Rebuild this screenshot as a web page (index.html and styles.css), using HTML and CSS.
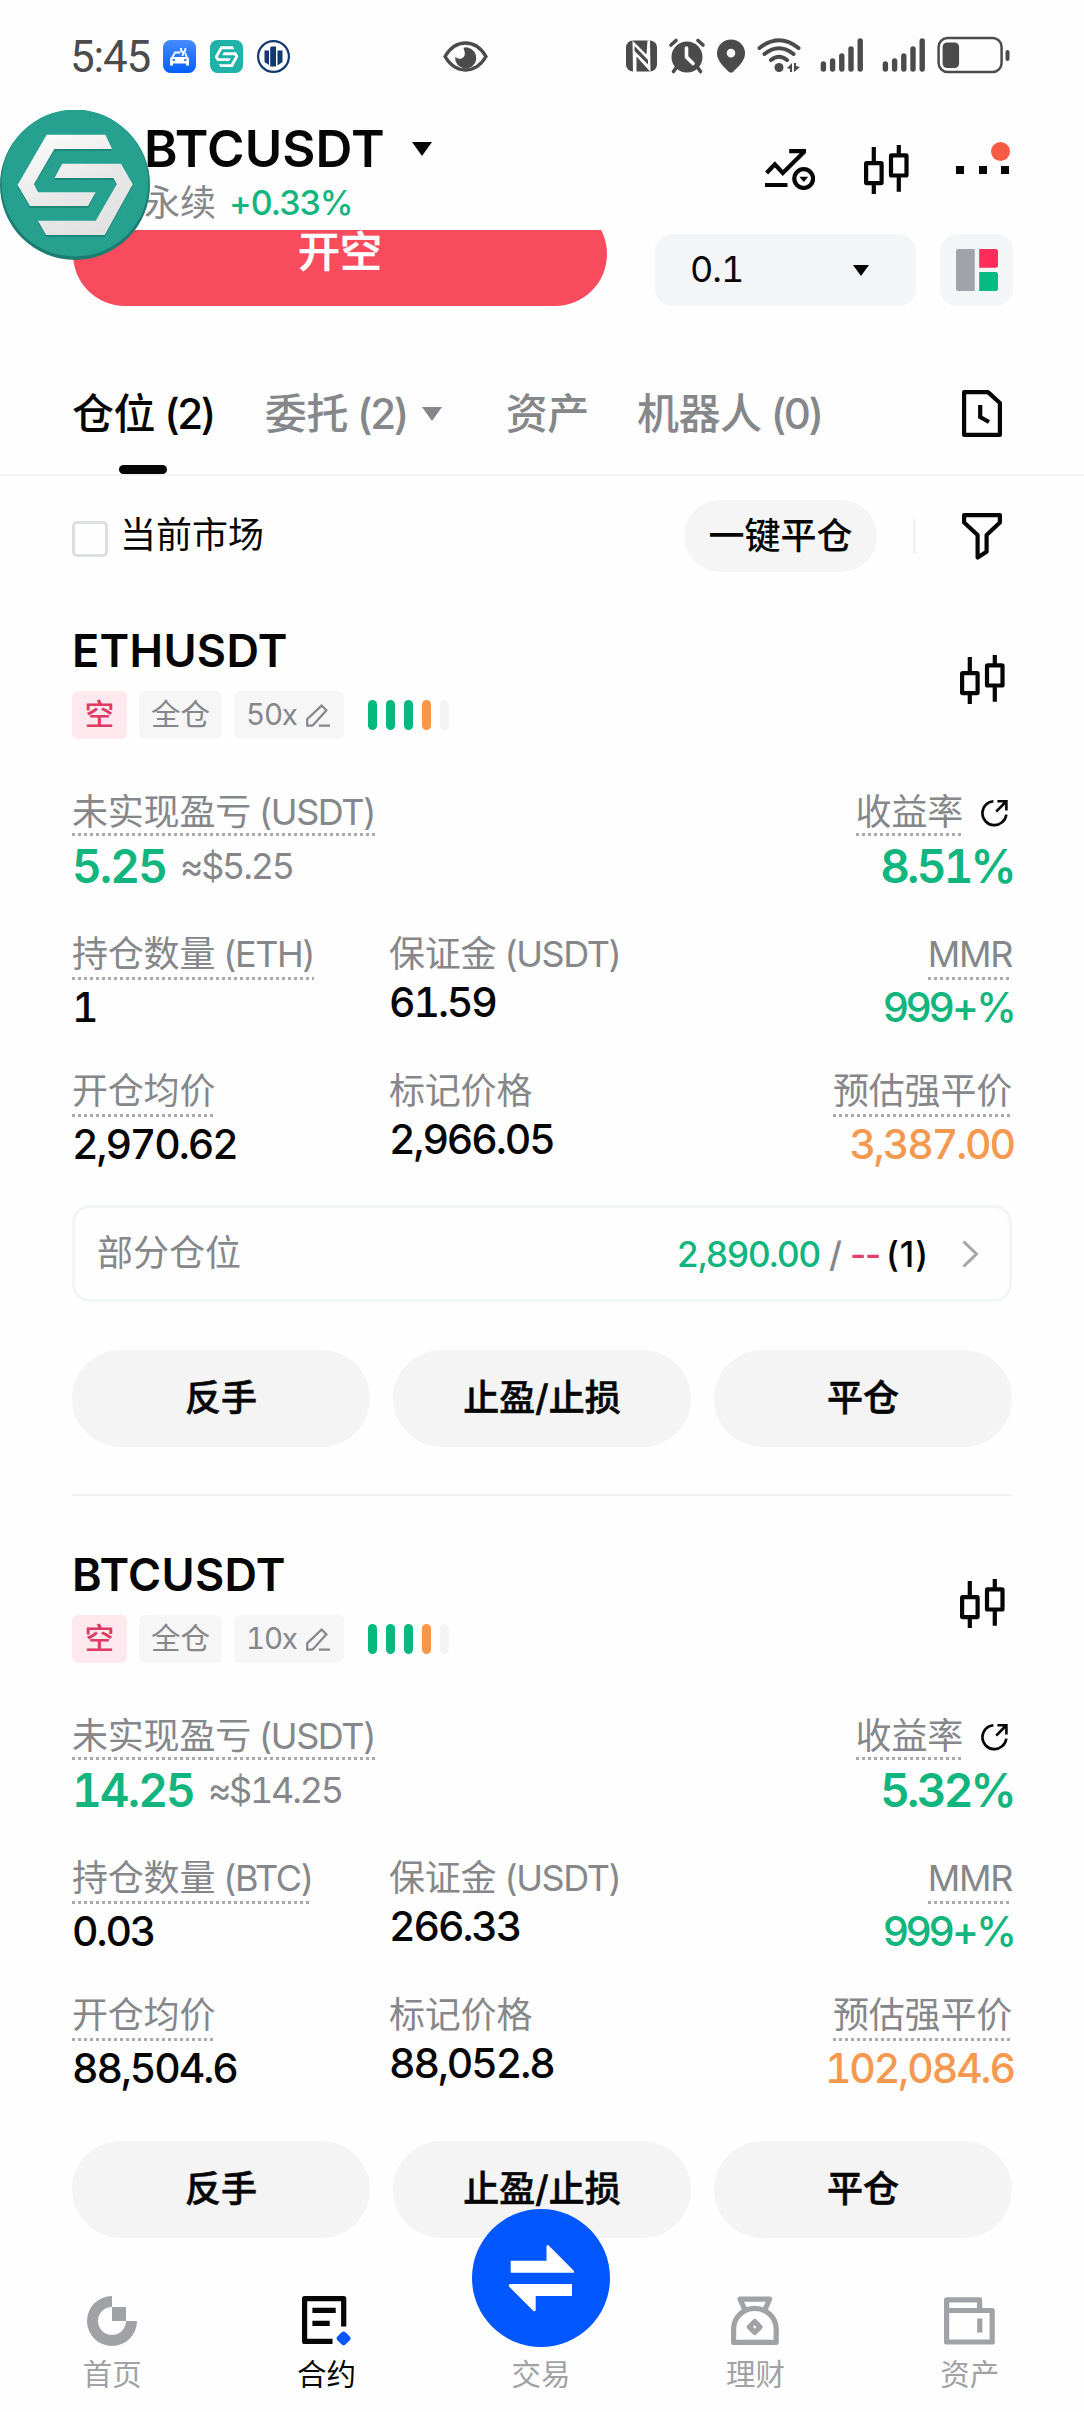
FILE: index.html
```html
<!DOCTYPE html>
<html lang="zh-CN">
<head>
<meta charset="utf-8">
<title>BTCUSDT 永续</title>
<link rel="stylesheet" href="styles.css">
</head>
<body>
<svg class="defs" aria-hidden="true">
  <symbol id="candles" viewBox="0 0 45 49">
    <g fill="none" stroke="#060606" stroke-width="4.2">
      <rect x="2.1" y="18.1" width="15.5" height="20.1" rx=".6"/>
      <rect x="27" y="10.4" width="15.5" height="20.1" rx=".6"/>
      <path d="M9.8 2V17M9.8 40V49M34.8 0V9M34.8 32V46.7"/>
    </g>
  </symbol>
  <symbol id="pencil" viewBox="0 0 24 23">
    <path d="M1.2 21.6V15.2L15.6 1.6L20.4 6.2L7.6 20.6Q6.6 21.6 5 21.6ZM13 21.6H24" fill="none" stroke="#85878a" stroke-width="2.2"/>
  </symbol>
  <symbol id="share" viewBox="0 0 27 28">
    <path d="M12.4 2.2A12 12 0 1 0 25.3 15.6M15.2 12.6L24.6 3M16.4 2.2H25.4V11.4" fill="none" stroke="#060606" stroke-width="2.6"/>
  </symbol>
  <symbol id="logo-s" viewBox="17 24 116 102">
    <path d="M46.7 24.7H105.4L112 39H54.3L33.9 74.3L38 82.3H95.7L88 96H30L17.6 75ZM62.2 53.7H121L132.7 74.3L104.7 125H46L38 110.7H95.7L116.8 74.3L113.4 68H54.6Z"/>
  </symbol>
</svg>

<header class="status">
  <span class="clock">5:45</span>
  <svg class="app" viewBox="0 0 33 33">
    <defs><linearGradient id="blue" x2="0" y2="1"><stop stop-color="#458bff"/><stop offset="1" stop-color="#0560ff"/></linearGradient></defs>
    <rect width="33" height="33" rx="7.5" fill="url(#blue)"/>
    <path d="M9 18L12 12.500H17.500M22 12.500L24 18" fill="none" stroke="#fff" stroke-width="1.800"/>
    <path d="M7 19Q7 17 9 17H24Q26 17 26 19V25.500H23V23.500H10V25.500H7Z" fill="#fff"/>
    <path d="M18 8V10.500L20.300 12.500L19.500 16M22.300 8V10.500L20.300 12.500" fill="none" stroke="#fff" stroke-width="1.800"/>
    <path d="M9.500 19.500L12 20.500M23.500 19.500L21 20.500" stroke="#1b6cff" stroke-width="1.400"/>
  </svg>
  <svg class="app" viewBox="0 0 33 33">
    <rect width="33" height="33" rx="7.500" fill="#1eb2a9"/>
    <use href="#logo-s" x="4.500" y="6" width="24" height="21.500" fill="#fff"/>
  </svg>
  <svg class="app" viewBox="0 0 33 33">
    <circle cx="16.500" cy="16.500" r="15.400" fill="#fff" stroke="#12386f" stroke-width="2.200"/>
    <path d="M7.500 10.500H12V25L7.500 22ZM13.200 8Q13.200 6.500 14.500 6.500H19V26.500H13.200ZM20.500 10.500H25.500V22L20.500 25.500Z" fill="#12386f"/>
  </svg>
  <svg class="eye" viewBox="0 0 45 31">
    <path d="M2 15.500Q10 2 22.500 2T43 15.500Q35 29 22.500 29T2 15.500Z" fill="none" stroke="#4b4b4b" stroke-width="3.400"/>
    <path d="M24.500 6.500A10.600 10.600 0 1 1 12.200 15.800Q15 18.500 18.500 17.500Q24 15.500 20.500 7Q22.500 6 24.500 6.500Z" fill="#4b4b4b"/>
  </svg>
  <svg class="system" viewBox="0 0 384 40" fill="#4b4b4b">
    <rect y="4.500" width="31" height="31" rx="7"/>
    <path d="M6.500 4.500L20.500 18.500L21.500 4.500H24L24.500 36L10.500 20.500V36H7Z" fill="#fff"/>
    <path d="M8.500 10L22 24V28.500L8.500 15Z"/>
    <circle cx="61" cy="21" r="15.500"/>
    <path d="M45 9L50 4.500M77 9L72 4.500M50 32L47.500 35.500M72 32L74.500 35.500" stroke="#4b4b4b" stroke-width="3.600" stroke-linecap="round"/>
    <path d="M60.500 12V21L67 27.500" fill="none" stroke="#fff" stroke-width="3.600" stroke-linecap="round"/>
    <path d="M105 3.500A14 14 0 0 0 91 17.500C91 25 98 31 103 36Q105 37.500 107 36C112 31 119 25 119 17.500A14 14 0 0 0 105 3.500ZM105 12.800A4.300 4.300 0 1 1 105 21.400A4.300 4.300 0 0 1 105 12.800Z" fill-rule="evenodd"/>
    <path d="M133.500 12Q153 -3.500 172.500 12M138.500 18Q153 6.500 167.500 18M145 24Q153 17.500 161 24" fill="none" stroke="#4b4b4b" stroke-width="4" stroke-linecap="round"/>
    <circle cx="153" cy="31.500" r="4.500"/>
    <path d="M161 32L166 27V36H164V33ZM168 27H170V30L174 31L168 36Z"/>
    <g stroke="#4b4b4b" stroke-width="5.400" stroke-linecap="round">
      <path d="M197.400 28V33M206.600 25V33M215.800 20V33M225 13V33M234.200 5V33"/>
      <path d="M259.400 28V33M268.600 25V33M277.800 20V33M287 13V33M296.200 5V33"/>
    </g>
    <rect x="312.600" y="2.100" width="63" height="34" rx="9" fill="none" stroke="#4b4b4b" stroke-width="2.500"/>
    <rect x="316.600" y="6.500" width="16.500" height="25.500" rx="4.500"/>
    <rect x="379.500" y="14" width="4" height="11" rx="2"/>
  </svg>
</header>

<div class="topbar">
  <div class="pair">
    <div class="pair-name"><b>BTCUSDT</b><i class="caret big"></i></div>
    <div class="pair-sub"><span>永续</span><em>+0.33%</em></div>
  </div>
  <div class="tools">
    <svg width="50" height="41" viewBox="0 0 50 41">
      <g fill="none" stroke="#060606" stroke-width="4.200">
        <path d="M1.600 24L9.800 15.300L17.800 24L39 3M24.200 2.100H41M0 36H22.500"/>
        <circle cx="38.700" cy="29.600" r="9.400"/>
      </g>
      <path d="M34.400 27.700H43.200L38.800 33Z"/>
    </svg>
    <svg width="45" height="49"><use href="#candles"/></svg>
    <div class="more"><i></i><i></i><i></i><span class="badge"></span></div>
  </div>
  <svg class="avatar" viewBox="0 0 150 150">
    <defs><linearGradient id="silver" x2="0.6" y2="1"><stop stop-color="#fff"/><stop offset=".6" stop-color="#e8e8e9"/><stop offset="1" stop-color="#e2e2e3"/></linearGradient></defs>
    <circle cx="75" cy="75" r="75" fill="#1a7d70"/>
    <circle cx="75" cy="73" r="73.500" fill="#27a18f"/>
    <use href="#logo-s" x="17" y="26" width="116" height="102" fill="#1c8778"/>
    <use href="#logo-s" x="17" y="24" width="116" height="102" fill="url(#silver)"/>
  </svg>
</div>

<div class="order">
  <div class="short"><span>开空</span></div>
  <div class="depth"><span>0.1</span><i class="caret small"></i></div>
  <div class="book"><svg width="42" height="42" viewBox="0 0 42 42">
    <path d="M2.500 0H18.700V42H2.500Q0 42 0 39.500V2.500Q0 0 2.500 0Z" fill="#a0a3a9"/>
    <path d="M23.200 0H39.500Q42 0 42 2.500V16.200Q42 18.700 39.500 18.700H23.200Z" fill="#ff2c5c"/>
    <path d="M23.200 23H39.500Q42 23 42 25.500V39.500Q42 42 39.500 42H23.200Z" fill="#05bb80"/>
  </svg></div>
</div>

<nav class="tabs">
  <span class="tab active"><span>仓位<span class="count">(2)</span></span></span>
  <span class="tab orders">委托<span class="count">(2)</span><i class="caret gray"></i></span>
  <span class="tab assets">资产</span>
  <span class="tab bots">机器人<span class="count">(0)</span></span>
  <svg width="40" height="47" viewBox="0 0 40 47" fill="none" stroke="#060606" stroke-width="4.200">
    <path d="M2.100 2.100H26L37.900 13V44.900H2.100Z" stroke-linejoin="round"/><path d="M18.200 15V27L27 32"/>
  </svg>
</nav>

<div class="filter">
  <i class="check"></i><span class="market">当前市场</span>
  <span class="close-all">一键平仓</span><i class="bar"></i>
  <svg width="40" height="47" viewBox="0 0 40 47" fill="none" stroke="#060606" stroke-width="4.200">
    <path d="M2.100 2.100H37.900V9.500L24.600 22V38.800L15.600 44.500V22L2.100 9.500Z" stroke-linejoin="round"/>
  </svg>
</div>

<section class="card">
  <div class="head">
    <div>
      <h2>ETHUSDT</h2>
      <div class="tags">
        <span class="tag short-tag">空</span><span class="tag">全仓</span>
        <span class="tag lev">50x<svg width="24" height="23"><use href="#pencil"/></svg></span>
        <span class="level"><i></i><i></i><i></i><i class="warn"></i><i class="off"></i></span>
      </div>
    </div>
    <svg class="chart" width="45" height="49"><use href="#candles"/></svg>
  </div>
  <div class="row first">
    <div><span class="label dot">未实现盈亏<span class="unit">(USDT)</span></span><p class="pnl"><b>5.25</b><small>≈$5.25</small></p></div>
    <div class="right"><div class="roi"><span class="label dot">收益率</span><svg width="27" height="28"><use href="#share"/></svg></div><p class="pnl"><b>8.51%</b></p></div>
  </div>
  <div class="row second">
    <div><span class="label dot">持仓数量<span class="unit">(ETH)</span></span><p>1</p></div>
    <div class="plain"><span class="label">保证金<span class="unit">(USDT)</span></span><p>61.59</p></div>
    <div class="right"><span class="label dot mmr">MMR</span><p class="green ratio">999+%</p></div>
  </div>
  <div class="row third">
    <div><span class="label dot">开仓均价</span><p>2,970.62</p></div>
    <div class="plain"><span class="label">标记价格</span><p>2,966.05</p></div>
    <div class="right"><span class="label dot">预估强平价</span><p class="orange">3,387.00</p></div>
  </div>
  <div class="partial">
    <span class="partial-name">部分仓位</span>
    <span class="green">2,890.00</span><span class="slash">/</span><span class="dash">--</span><span class="amount">(1)</span>
    <svg width="17" height="28" viewBox="0 0 17 28"><path d="M1.500 1.500L14.500 14L1.500 26.500" fill="none" stroke="#a3a5a8" stroke-width="3"/></svg>
  </div>
  <div class="actions"><span>反手</span><span>止盈/止损</span><span>平仓</span></div>
</section>

<section class="card last">
  <div class="head">
    <div>
      <h2>BTCUSDT</h2>
      <div class="tags">
        <span class="tag short-tag">空</span><span class="tag">全仓</span>
        <span class="tag lev">10x<svg width="24" height="23"><use href="#pencil"/></svg></span>
        <span class="level"><i></i><i></i><i></i><i class="warn"></i><i class="off"></i></span>
      </div>
    </div>
    <svg class="chart" width="45" height="49"><use href="#candles"/></svg>
  </div>
  <div class="row first">
    <div><span class="label dot">未实现盈亏<span class="unit">(USDT)</span></span><p class="pnl"><b>14.25</b><small>≈$14.25</small></p></div>
    <div class="right"><div class="roi"><span class="label dot">收益率</span><svg width="27" height="28"><use href="#share"/></svg></div><p class="pnl"><b>5.32%</b></p></div>
  </div>
  <div class="row second">
    <div><span class="label dot">持仓数量<span class="unit">(BTC)</span></span><p>0.03</p></div>
    <div class="plain"><span class="label">保证金<span class="unit">(USDT)</span></span><p>266.33</p></div>
    <div class="right"><span class="label dot mmr">MMR</span><p class="green ratio">999+%</p></div>
  </div>
  <div class="row third">
    <div><span class="label dot">开仓均价</span><p>88,504.6</p></div>
    <div class="plain"><span class="label">标记价格</span><p>88,052.8</p></div>
    <div class="right"><span class="label dot">预估强平价</span><p class="orange">102,084.6</p></div>
  </div>
  <div class="actions"><span>反手</span><span>止盈/止损</span><span>平仓</span></div>
</section>

<footer class="nav">
  <div class="item"><svg width="50" height="50" viewBox="0 0 50 50" fill="#a0a2a5"><path d="M25 0A25 25 0 1 0 50 25H39A14 14 0 1 1 25 11Z"/><path d="M25 11H39V25H25Z"/></svg><span>首页</span></div>
  <div class="item on"><svg width="50" height="50" viewBox="0 0 50 50"><path d="M41.700 30.500V2.600H2.600V45.400H30.500M10.400 14.300H33.700M10.400 27.300H27.700" fill="none" stroke="#060606" stroke-width="5.200" stroke-linejoin="round"/><rect x="35.900" y="36.700" width="11.400" height="11.400" rx="3" transform="rotate(45 41.600 42.400)" fill="#0755ff"/></svg><span>合约</span></div>
  <div class="item trade"><svg width="138" height="138" viewBox="0 0 138 138"><circle cx="69" cy="69" r="69" fill="#0057ff"/><path d="M38.700 51.800H74.500V37.500Q75 35 77 36.800L101.500 61.500Q103 63.800 100.500 63.800H38.700ZM100 75H38Q36 75.500 37 77.500L61.500 102Q63.500 103 63.700 101V87H100Z" fill="#fff"/></svg><span>交易</span></div>
  <div class="item"><svg width="48" height="50" viewBox="0 0 48 50" fill="none" stroke="#a0a2a5" stroke-width="5.200" stroke-linejoin="round"><path d="M13.500 13L9 3.200H38.600L34.300 13M2.600 46.300V33A21.200 20.500 0 0 1 45.200 33V46.300Z"/><rect x="19.900" y="27.200" width="7.600" height="7.600" transform="rotate(45 23.700 31)"/></svg><span>理财</span></div>
  <div class="item"><svg width="51" height="50" viewBox="0 0 51 50" fill="none" stroke="#a0a2a5" stroke-width="5.200" stroke-linejoin="round"><path d="M2.600 14V3.800H35.600V14M2.600 14.500H48.200V46H2.600ZM35.800 22.500V36.500"/></svg><span>资产</span></div>
</footer>
</body>
</html>
```
FILE: styles.css
```css
* { box-sizing: border-box; }
body {
  margin: 0;
  width: 1084px;
  height: 2412px;
  overflow: hidden;
  background: #fefefe;
  color: #060606;
  font-family: Inter, "Noto Sans CJK SC", sans-serif;
  font-size: 36px;
  line-height: 1.2;
}
svg { display: block; flex: none; }
i, em { font-style: normal; }
p, h2 { margin: 0; }
.defs { position: absolute; width: 0; height: 0; }
.caret { width: 0; height: 0; border-style: solid; border-color: currentColor transparent transparent; flex: none; }
.green { color: #12b57d; }
.orange { color: #f59850; }

/* Status bar */
.status { display: flex; align-items: center; height: 113px; padding: 0 74px 0 70px; color: #4b4b4b; }
.clock { width: 93px; font: 400 44px/50px Roboto, sans-serif; letter-spacing: -1.2px; }
.app { width: 33px; height: 33px; margin-right: 14px; }
.eye { width: 45px; height: 31px; margin-left: 139px; }
.system { width: 384px; height: 40px; margin-left: auto; margin-bottom: 2px; }

/* Pair header */
.topbar { position: relative; display: flex; height: 117px; padding: 7px 72px 0 144px; }
.pair { flex: 1; }
.pair-name { display: flex; align-items: center; height: 58px; }
.pair-name b { font-size: 51px; font-weight: 600; letter-spacing: .1px; }
.big { border-width: 14px 10.5px 0; margin-left: 27px; }
.pair-sub { display: flex; align-items: center; height: 49px; color: #85878a; line-height: 46px; }
.pair-sub em { margin-left: 13px; color: #12b57d; font-size: 34px; font-weight: 500; letter-spacing: -1px; }
.tools { display: flex; align-items: center; height: 99px; }
.tools svg + svg { margin-left: 49px; }
.more { position: relative; display: flex; justify-content: space-between; width: 53px; margin-left: 47px; margin-right: 3px; }
.more i { width: 8px; height: 8px; background: #060606; }
.badge { position: absolute; right: -1px; top: -24px; width: 19px; height: 19px; border-radius: 50%; background: #f85b45; }
.avatar { position: absolute; left: 0; top: -3px; width: 150px; height: 150px; z-index: 2; }

/* Order controls, partly scrolled under the header */
.order { display: flex; align-items: flex-end; height: 76px; padding: 0 71px 0 73px; overflow: hidden; }
.short { width: 534px; height: 104px; border-radius: 52px; background: #f84c5e; color: #fff; font-size: 42px; font-weight: 500; line-height: 99px; text-align: center; flex: none; -webkit-text-stroke: .5px; }
.depth { display: flex; align-items: center; justify-content: space-between; width: 261px; height: 72px; margin-left: 48px; padding: 0 47px 0 35px; border-radius: 17px; background: #f4f5f6; font-feature-settings: "tnum"; letter-spacing: -1px; }
.small { border-width: 11px 8px 0; }
.book { display: flex; align-items: center; justify-content: center; width: 73px; height: 72px; margin-left: auto; border-radius: 17px; background: #f4f5f6; }

/* Tabs */
.tabs { display: flex; height: 170px; padding: 70px 82px 0 72px; border-bottom: 2px solid #f2f3f3; color: #85878a; font-size: 42px; font-weight: 500; line-height: 76px; }
.tabs svg { margin: 14px 0 0 auto; }
.tab { display: flex; align-items: center; height: 98px; padding-bottom: 22px; white-space: pre; letter-spacing: -.4px; }
.count { margin-left: 9px; letter-spacing: -2.4px; }
.active { flex-direction: column; align-items: center; height: 98px; padding: 0; color: #060606; }
.active::after { content: ""; width: 48px; height: 9px; margin-top: 13px; border-radius: 4.5px; background: #060606; flex: none; }
.orders { margin-left: 51px; }
.gray { border-width: 14px 10.5px 0; margin-left: 15px; }
.assets { margin-left: 64px; }
.bots { margin-left: 48px; }

/* Filter row */
.filter { display: flex; align-items: center; height: 132px; padding: 0 82px 12px 72px; }
.check { width: 36px; height: 36px; margin-top: 6px; border: 3px solid #dedfdf; border-radius: 5px; }
.market { margin-left: 12px; }
.close-all { width: 193px; height: 72px; margin-left: auto; border-radius: 36px; background: #f5f5f5; font-weight: 500; line-height: 72px; text-align: center; }
.bar { width: 3px; height: 35px; margin: 0 46px 0 36px; background: #f2f4f4; }

/* Position card */
.card { height: 888px; margin: 0 72px 36px; padding-top: 14px; border-bottom: 2px solid #f2f2f2; }
.card.last { height: 705px; margin-bottom: 0; border: 0; }
.head { display: flex; justify-content: space-between; height: 169px; }
.head h2 { font-size: 45px; font-weight: 600; line-height: 58px; letter-spacing: .3px; }
.chart { margin: 33px 7px 0 0; }
.tags { display: flex; margin-top: 11px; height: 48px; gap: 12px; }
.tag { display: flex; align-items: center; height: 48px; padding: 0 12px; border-radius: 6px; background: #f6f6f6; color: #85878a; font-size: 29.5px; }
.short-tag { width: 55px; justify-content: center; background: #ffe9ee; color: #dd3a65; font-weight: 500; }
.lev { width: 110px; justify-content: space-between; padding-right: 14px; font-feature-settings: "tnum"; letter-spacing: -1.2px; }
.level { display: flex; gap: 9px; padding: 9px 0 9px 12px; }
.level i { width: 9px; height: 30px; border-radius: 4.5px; background: #08b97f; }
.level .warn { background: #fd9548; }
.level .off { background: #f3f3f3; }
.row { display: grid; grid-template-columns: 317px 1fr auto; }
.first { grid-template-columns: 1fr auto; height: 140px; }
.second { height: 137px; }
.third { height: 137px; }
.label { display: inline-block; vertical-align: top; height: 46px; color: #85878a; line-height: 46px; white-space: pre; letter-spacing: -.2px; }
.unit { margin-left: 8px; letter-spacing: -1.4px; }
.mmr { letter-spacing: -1.3px; }
.first .label { line-height: 42px; height: 42px; }
.dot { background: repeating-linear-gradient(90deg, #a9abad 0 3px, transparent 3px 6px) left bottom / 100% 3px no-repeat; height: 49px; }
.first .dot { height: 45px; }
.row p { font-size: 41px; font-weight: 500; line-height: 55px; font-feature-settings: "tnum"; letter-spacing: -2.1px; }
.row .ratio { font-feature-settings: normal; letter-spacing: -2.9px; }
.row .plain p { line-height: 50px; }
.plain .label { display: block; }
.right { text-align: right; }
.right p { margin-right: -2px; }
.row .pnl { display: flex; align-items: center; height: 60px; line-height: 60px; }
.right .pnl { justify-content: flex-end; }
.pnl b { color: #12b57d; font-size: 46px; font-weight: 600; letter-spacing: -1.9px; }
.right .pnl b { letter-spacing: -2.8px; }
.pnl small { margin-left: 14px; color: #85878a; font-size: 36px; font-weight: 400; letter-spacing: -2.2px; }
.roi { display: flex; justify-content: flex-end; }
.roi svg { margin: 8px 4px 0 18px; }
.partial { display: flex; align-items: center; height: 97px; padding: 0 30px 0 22px; border: 3px solid #f2f5f5; border-radius: 18px; font-size: 35px; font-weight: 500; letter-spacing: -1.1px; }
.partial-name { margin-right: auto; color: #85878a; font-size: 36px; font-weight: 400; letter-spacing: 0; }
.slash { margin-left: 9px; color: #85878a; }
.dash { margin: 0 6px 0 9px; color: #e0406a; }
.amount { letter-spacing: .8px; }
.partial svg { margin-left: 33px; }
.actions { display: grid; grid-template-columns: repeat(3, 1fr); gap: 23px; margin-top: 48px; }
.actions span { height: 97px; border-radius: 48.5px; background: #f4f4f4; font-weight: 500; line-height: 96px; text-align: center; -webkit-text-stroke: .6px; }
.last .third { height: 149px; }
.last .actions { margin-top: 0; }

/* Bottom navigation */
.nav { position: relative; display: flex; height: 175px; padding: 0 7px 18px 5px; }
.item { display: flex; flex: 1; flex-direction: column; align-items: center; justify-content: flex-end; color: #a0a2a5; font-size: 29.5px; line-height: 40px; }
.item span { margin-top: 8px; }
.on { color: #060606; }
.trade span { margin-top: 7px; }
```
